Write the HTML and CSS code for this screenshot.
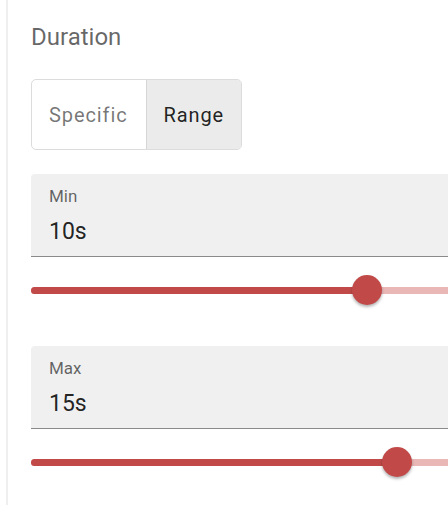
FILE: index.html
```html
<!DOCTYPE html>
<html>
<head>
<meta charset="utf-8">
<link rel="stylesheet" href="styles.css">
</head>
<body>
<div class="panel">
  <div class="heading">Duration</div>
  <div class="toggle">
    <div class="tbtn">Specific</div>
    <div class="tbtn selected">Range</div>
  </div>
  <div class="field">
    <div class="label">Min</div>
    <div class="value">10s</div>
  </div>
  <div class="slider">
    <div class="rail"></div>
    <div class="fill" style="width: 336px"></div>
    <div class="thumb" style="left: 336px"></div>
  </div>
  <div class="field">
    <div class="label">Max</div>
    <div class="value">15s</div>
  </div>
  <div class="slider">
    <div class="rail"></div>
    <div class="fill" style="width: 366px"></div>
    <div class="thumb" style="left: 366px"></div>
  </div>
</div>
</body>
</html>
```

FILE: styles.css
```css
html, body {
  margin: 0;
  padding: 0;
  background: #fff;
  overflow: hidden;
  height: 505px;
}
body {
  font-family: Roboto, "Noto Sans", sans-serif;
}
.panel {
  margin-left: 6px;
  border-left: 2px solid #efefef;
  padding: 23px 0 0 23px;
  width: 700px;
  height: 482px;
  overflow: hidden;
}
.heading {
  font-size: 24px;
  line-height: 28px;
  color: rgba(0,0,0,0.6);
}
.toggle {
  display: inline-flex;
  margin-top: 28px;
  border: 1px solid #dcdcdc;
  border-radius: 5px;
  overflow: hidden;
  height: 69px;
}
.tbtn {
  display: flex;
  align-items: center;
  padding: 0 17px;
  font-size: 20px;
  letter-spacing: 0.9px;
  color: rgba(0,0,0,0.55);
}
.tbtn:first-child {
  padding-right: 18px;
}
.tbtn.selected {
  background: #ebebeb;
  color: rgba(0,0,0,0.87);
  border-left: 1px solid #d6d6d6;
}
.field {
  margin-top: 24px;
  height: 70px;
  background: #f0f0f0;
  border-bottom: 1px solid #8a8a8a;
  border-radius: 4px 4px 0 0;
  padding: 12px 0 0 18px;
}
.label {
  font-size: 17px;
  line-height: 20px;
  color: rgba(0,0,0,0.6);
}
.value {
  margin-top: 12px;
  font-size: 23px;
  line-height: 27px;
  color: rgba(0,0,0,0.87);
}
.slider {
  position: relative;
  height: 68px;
}
.slider + .field {
  margin-top: 21px;
}
.rail {
  position: absolute;
  left: 0;
  right: 0;
  top: 30px;
  height: 7px;
  border-radius: 4px;
  background: #e8b7b6;
}
.fill {
  position: absolute;
  left: 0;
  top: 30px;
  height: 7px;
  border-radius: 4px 0 0 4px;
  background: #c14a49;
}
.thumb {
  position: absolute;
  top: 18px;
  width: 30px;
  height: 30px;
  margin-left: -15px;
  border-radius: 50%;
  background: #c14a49;
  box-shadow: 0 2px 3px rgba(0,0,0,0.3);
}
```
